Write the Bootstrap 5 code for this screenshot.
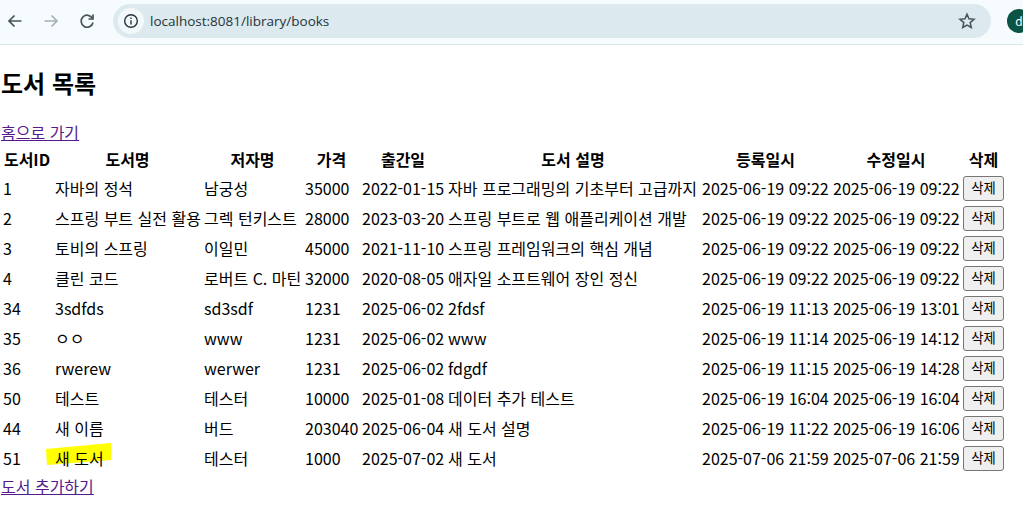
<!DOCTYPE html>
<html lang="ko">
<head>
    <meta charset="UTF-8">
    <meta name="viewport" content="width=device-width, initial-scale=1.0">
    <title>도서 목록</title>
    <link rel="stylesheet" href="https://cdn.jsdelivr.net/npm/bootstrap@5.3.0/dist/css/bootstrap.min.css">
    <style>
        body { font-family: "Noto Sans CJK KR", "Noto Sans", sans-serif; font-size: 16px; color: #000; overflow: hidden; }
        a { color: #551a8b; }
        a:hover { color: #551a8b; }

        .toolbar { height: 45px; background: #f6fbfe; border-bottom: 1px solid #dbe6ea; overflow: hidden; padding-left: 6px; }
        .nav-btn { width: 18px; height: 18px; margin: 0 18px 2px 0; flex-shrink: 0; }
        .nav-btn.last { margin-right: 17px; }
        .omnibox { width: 878px; height: 34px; margin: 0 16px 2px 0; background: #dce9ee; border-radius: 17px; flex-shrink: 0; padding: 0 15px 0 5px; }
        .info { width: 26px; height: 26px; background: #f3f8fa; border-radius: 50%; margin-right: 6px; }
        .url { font-family: "Open Sans", sans-serif; font-size: 13.5px; color: #27343a; }
        .avatar { width: 24px; height: 24px; background: #0b5345; color: #fff; border-radius: 50%; font-size: 12px; flex-shrink: 0; margin-bottom: 2px; }

        h2.title { font-size: 24px; font-weight: 700; margin: 22px 0 21px 1px; line-height: 32px; }
        .links { line-height: 24px; margin-left: 1px; }
        .book-table { border-collapse: separate; border-spacing: 2px; table-layout: fixed; width: 1007px; margin-top: 1px; line-height: 24px; }
        .book-table th, .book-table td { padding: 1px; white-space: nowrap; overflow: visible; }
        .book-table th { text-align: center; font-weight: 700; line-height: 23px; }
        .book-table td { height: 28px; }
        .w-id { width: 50px; } .w-name { width: 147px; } .w-author { width: 99px; } .w-price { width: 55px; }
        .w-date { width: 84px; } .w-desc { width: 252px; } .w-reg { width: 129px; } .w-mod { width: 128px; } .w-del { width: 43px; }
        .del-btn { font-size: 13.3px; line-height: 16px; width: 41px; height: 25px; padding: 0; background: #efefef; border: 1px solid #767676; border-radius: 3px; color: #000; display: block; }
        .marker { left: -8px; top: -1px; width: 65px; height: 23px; z-index: -1; }
        .marked { z-index: 0; }
    </style>
</head>
<body>
    <!-- 브라우저 상단 -->
    <div class="toolbar d-flex align-items-center">
        <svg class="nav-btn" viewBox="0 0 18 18" fill="none" stroke="#47545a" stroke-width="1.7"><path d="M15.5 9H3M8.5 3.5 3 9l5.500 5.500"/></svg>
        <svg class="nav-btn" viewBox="0 0 18 18" fill="none" stroke="#a6b0b5" stroke-width="1.7"><path d="M2.500 9H15M9.500 3.500 15 9l-5.500 5.500"/></svg>
        <svg class="nav-btn last" viewBox="0 0 18 18" fill="none" stroke="#47545a" stroke-width="1.7"><path d="M14.500 6.500A6 6 0 1 0 15 10.500"/><path d="M15 2.500V7h-4.500" /></svg>
        <div class="omnibox d-flex align-items-center">
            <div class="info d-flex align-items-center justify-content-center">
                <svg width="16" height="16" viewBox="0 0 16 16" fill="none" stroke="#27343a" stroke-width="1.400"><circle cx="8" cy="8" r="6.300"/><path d="M8 7.200V11.500M8 4.500v1.400"/></svg>
            </div>
            <span class="url">localhost:8081/library/books</span>
            <svg class="ms-auto" width="18" height="18" viewBox="0 0 18 18" fill="none" stroke="#47545a" stroke-width="1.500"><path d="M9 2.200 11 6.800l5 .5-3.800 3.300 1.100 4.900L9 13l-4.300 2.500 1.100-4.900L2 7.300l5-.5z"/></svg>
        </div>
        <div class="avatar d-flex align-items-center justify-content-center">d</div>
    </div>

    <h2 class="title">도서 목록</h2>
    <div class="links"><a href="#">홈으로 가기</a></div>

    <table class="book-table">
        <colgroup>
            <col class="w-id"><col class="w-name"><col class="w-author"><col class="w-price"><col class="w-date">
            <col class="w-desc"><col class="w-reg"><col class="w-mod"><col class="w-del">
        </colgroup>
        <thead>
            <tr>
                <th>도서ID</th><th>도서명</th><th>저자명</th><th>가격</th><th>출간일</th>
                <th>도서 설명</th><th>등록일시</th><th>수정일시</th><th>삭제</th>
            </tr>
        </thead>
        <tbody id="bookRows"></tbody>
    </table>
    <div class="links"><a href="#">도서 추가하기</a></div>

    <script>
        const books = [
            [1, '자바의 정석', '남궁성', 35000, '2022-01-15', '자바 프로그래밍의 기초부터 고급까지', '2025-06-19 09:22', '2025-06-19 09:22'],
            [2, '스프링 부트 실전 활용', '그렉 턴키스트', 28000, '2023-03-20', '스프링 부트로 웹 애플리케이션 개발', '2025-06-19 09:22', '2025-06-19 09:22'],
            [3, '토비의 스프링', '이일민', 45000, '2021-11-10', '스프링 프레임워크의 핵심 개념', '2025-06-19 09:22', '2025-06-19 09:22'],
            [4, '클린 코드', '로버트 C. 마틴', 32000, '2020-08-05', '애자일 소프트웨어 장인 정신', '2025-06-19 09:22', '2025-06-19 09:22'],
            [34, '3sdfds', 'sd3sdf', 1231, '2025-06-02', '2fdsf', '2025-06-19 11:13', '2025-06-19 13:01'],
            [35, 'ㅇㅇ', 'www', 1231, '2025-06-02', 'www', '2025-06-19 11:14', '2025-06-19 14:12'],
            [36, 'rwerew', 'werwer', 1231, '2025-06-02', 'fdgdf', '2025-06-19 11:15', '2025-06-19 14:28'],
            [50, '테스트', '테스터', 10000, '2025-01-08', '데이터 추가 테스트', '2025-06-19 16:04', '2025-06-19 16:04'],
            [44, '새 이름', '버드', 203040, '2025-06-04', '새 도서 설명', '2025-06-19 11:22', '2025-06-19 16:06'],
            [51, '새 도서', '테스터', 1000, '2025-07-02', '새 도서', '2025-07-06 21:59', '2025-07-06 21:59']
        ];

        const marker = '<svg class="marker position-absolute" viewBox="0 0 65 23" preserveAspectRatio="none"><polygon points="0,6 65,0 65,17 1,22" fill="#ffff00"/></svg>';

        document.getElementById('bookRows').innerHTML = books.map(book => {
            const cells = book.map((value, i) => {
                if (i === 1 && book[0] === 51) {
                    return `<td class="position-relative marked">${marker}${value}</td>`;
                }
                return `<td>${value}</td>`;
            }).join('');
            return `<tr>${cells}<td><button class="btn del-btn" type="button">삭제</button></td></tr>`;
        }).join('');
    </script>
    <script src="https://cdn.jsdelivr.net/npm/bootstrap@5.3.0/dist/js/bootstrap.bundle.min.js"></script>
</body>
</html>
